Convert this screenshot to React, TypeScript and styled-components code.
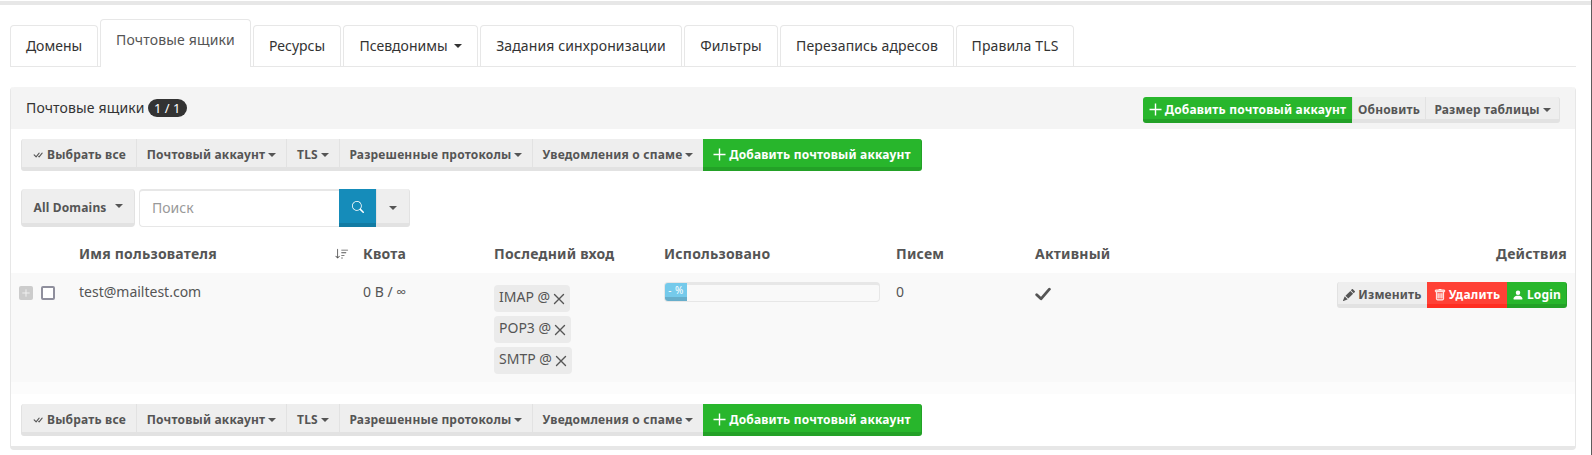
import React from "react";
import styled, { createGlobalStyle, css } from "styled-components";
import {
  BsCheckAll,
  BsPencilFill,
  BsPersonFill,
  BsSearch,
  BsSortDown,
  BsTrash,
} from "react-icons/bs";

const GlobalStyle = createGlobalStyle`
  *, *::before, *::after { box-sizing: border-box; }
  body {
    margin: 0;
    background: #fff;
    color: #555;
    font-family: "Noto Sans", "Open Sans", sans-serif;
    font-size: 14px;
    line-height: 20px;
    overflow: hidden;
  }
  button, input { font: inherit; }
`;

const Page = styled.div`
  height: 455px;
  border-right: 1px solid #5c5c5c;
  padding: 1px 15px 0 10px;
  background: #fff;
`;

const NavEdge = styled.div`
  height: 4px;
  margin: 0 -15px 0 -10px;
  background: #e7e7e7;
`;

const Tabs = styled.nav`
  display: flex;
  align-items: flex-end;
  gap: 2px;
  height: 62px;
  border-bottom: 1px solid #e7e7e7;
`;

const Tab = styled.a<{ $w: number; $active?: boolean; $tracking?: number }>`
  display: flex;
  justify-content: center;
  align-items: center;
  gap: 6px;
  width: ${(p) => p.$w}px;
  height: 41px;
  border: 1px solid #e7e7e7;
  border-bottom: 0;
  border-radius: 4px 4px 0 0;
  color: #333;
  background: #fff;
  letter-spacing: ${(p) => p.$tracking ?? 0.12}px;
  white-space: nowrap;
  ${(p) =>
    p.$active &&
    css`
      height: 48px;
      margin-bottom: -1px;
      padding-bottom: 8px;
      color: #555;
    `}
`;

const Caret = styled.span`
  display: inline-block;
  border: 4px solid transparent;
  border-top-color: currentColor;
  border-bottom: 0;
`;

const SelectCaret = styled(Caret)`
  margin: 0 0 3px 5px;
`;

const Panel = styled.section`
  margin-top: 20px;
  height: 363px;
  border: 1px solid #e7e7e7;
  border-top: 0;
  border-bottom-width: 4px;
  border-radius: 4px;
`;

const PanelHeader = styled.header`
  display: flex;
  justify-content: space-between;
  height: 42px;
  padding: 10px 15px 0;
  background: #f4f4f4;
  border-radius: 4px 4px 0 0;
  color: #333;
`;

const PanelTitle = styled.div`
  display: flex;
  align-items: center;
  gap: 3px;
  height: 22px;
  letter-spacing: 0.14px;
`;

const CountBadge = styled.span`
  width: 39px;
  height: 18px;
  border-radius: 9px;
  background: #333;
  color: #fff;
  font-size: 13px;
  line-height: 18px;
  letter-spacing: 0;
  text-align: center;
`;

const Group = styled.div`
  display: flex;
`;

type Tone = "plain" | "green" | "red" | "blue";
const tones = {
  plain: css`
    color: #555;
    background: #eee;
    border-color: #e2e2e2;
  `,
  green: css`
    color: #fff;
    background: #28b62c;
    border-color: #23a127;
  `,
  red: css`
    color: #fff;
    background: #ff4136;
    border-color: #ff2e22;
  `,
  blue: css`
    color: #fff;
    background: #158cba;
    border-color: #127ba3;
  `,
};

const Button = styled.button<{ $w: number; $h?: number; $tone?: Tone }>`
  display: flex;
  align-items: center;
  justify-content: center;
  gap: 3px;
  width: ${(p) => p.$w}px;
  height: ${(p) => p.$h ?? 32}px;
  padding: 3px 0 0;
  border: 0 solid;
  border-width: 0 0 4px 1px;
  font-size: 12px;
  line-height: 18px;
  font-weight: 700;
  letter-spacing: 0.18px;
  white-space: nowrap;
  ${(p) => tones[p.$tone ?? "plain"]}
  ${(p) => p.$tone && css`border-left-width: 0;`}
  &:first-child { border-radius: 3px 0 0 3px; }
  &:last-child { border-right-width: 1px; border-radius: 0 3px 3px 0; }
  &:only-child { border-radius: 4px; }
`;

const SearchButton = styled(Button)`
  padding: 1px 0 0;
`;

const ToolbarRow = styled.div<{ $top: number }>`
  padding: ${(p) => p.$top}px 0 0 10px;
`;

const SearchRow = styled.div`
  display: flex;
  gap: 4px;
  padding: 18px 0 0 10px;
`;

const SearchInput = styled.input`
  width: 200px;
  height: 38px;
  padding: 0 12px 2px;
  border: 1px solid #e7e7e7;
  border-top-width: 2px;
  border-right: 0;
  border-radius: 4px 0 0 4px;
  color: #555;
  outline: 0;
  &::placeholder { color: #999; opacity: 1; }
`;

const columns = "68px 284px 131px 170px 232px 139px 1fr";

const HeadRow = styled.div`
  display: grid;
  grid-template-columns: ${columns};
  align-items: center;
  height: 46px;
  padding: 8px 8px 0 0;
  font-weight: 700;
  letter-spacing: 0.22px;
`;

const NameHead = styled.div`
  display: flex;
  align-items: center;
  justify-content: space-between;
  padding-right: 14px;
`;

const EndCell = styled.div`
  display: flex;
  flex: 1;
  justify-content: flex-end;
`;

const BodyRow = styled.div`
  display: grid;
  grid-template-columns: ${columns};
  align-items: start;
  height: 109px;
  padding: 9px 8px 0 0;
  background: #f9f9f9;
`;

const Selectors = styled.div`
  display: flex;
  gap: 8px;
  padding: 4px 0 0 8px;
`;

const Expander = styled.span`
  display: flex;
  align-items: center;
  justify-content: center;
  width: 14px;
  height: 14px;
  border-radius: 2px;
  background: #ccc;
  color: #f5f5f5;
`;

const Checkbox = styled.span`
  width: 14px;
  height: 14px;
  border: 2px solid #8f8f9d;
  border-radius: 2px;
  background: #fff;
`;

const Logins = styled.div`
  display: flex;
  flex-direction: column;
  align-items: flex-start;
  gap: 4px;
  padding-top: 3px;
`;

const Login = styled.span`
  display: flex;
  align-items: center;
  gap: 3px;
  height: 27px;
  padding: 0 5px 4px;
  border-radius: 4px;
  background: #ebebeb;
  svg { margin-top: 5px; }
`;

const Progress = styled.div`
  width: 216px;
  height: 20px;
  border: 1px solid #e7e7e7;
  border-width: 3px 1px 1px;
  border-radius: 4px;
`;

const ProgressBar = styled.div`
  width: 22px;
  height: 18px;
  margin-top: -2px;
  border-bottom: 4px solid #67aecb;
  border-radius: 3px 0 0 3px;
  background: #75caeb;
  color: #fff;
  font-size: 10px;
  line-height: 15px;
  letter-spacing: 0.4px;
  text-align: center;
  white-space: nowrap;
`;

const CellIcon = styled.div`
  padding-top: 4px;
`;

const Actions = styled(EndCell)`
  button { height: 26px; padding-top: 4px; }
`;

const TableFoot = styled.div`
  height: 12px;
  background: #fcfcfc;
`;

const PlusIcon = ({ size = 13 }: { size?: number }) => (
  <svg width={size} height={size} viewBox="0 0 13 13" fill="none" stroke="currentColor" strokeWidth="1.4">
    <path d="M6.5 .5v12M.5 6.5h12" />
  </svg>
);

const CrossIcon = () => (
  <svg width="12" height="12" viewBox="0 0 12 12" fill="none" stroke="currentColor" strokeWidth="1.4" strokeLinecap="round">
    <path d="M1.5 1.5l9 9M10.5 1.5l-9 9" />
  </svg>
);

const CheckIcon = () => (
  <svg width="16" height="16" viewBox="0 0 16 16" fill="none" stroke="currentColor" strokeWidth="2.8" strokeLinecap="round" strokeLinejoin="round">
    <path d="M1.7 8.7l4.3 4.1L14.4 3.2" />
  </svg>
);

function Toolbar({ top }: { top: number }) {
  return (
    <ToolbarRow $top={top}>
      <Group>
        <Button $w={115}>
          <BsCheckAll size={12} /> Выбрать все
        </Button>
        <Button $w={150}>
          Почтовый аккаунт <Caret />
        </Button>
        <Button $w={53}>
          TLS <Caret />
        </Button>
        <Button $w={193}>
          Разрешенные протоколы <Caret />
        </Button>
        <Button $w={171}>
          Уведомления о спаме <Caret />
        </Button>
        <Button $w={219} $tone="green">
          <PlusIcon /> Добавить почтовый аккаунт
        </Button>
      </Group>
    </ToolbarRow>
  );
}

export default function App() {
  return (
    <Page>
      <GlobalStyle />
      <NavEdge />
      <Tabs>
        <Tab $w={88} $tracking={0}>
          Домены
        </Tab>
        <Tab $w={151} $active $tracking={0.16}>
          Почтовые ящики
        </Tab>
        <Tab $w={88} $tracking={0}>
          Ресурсы
        </Tab>
        <Tab $w={135} $tracking={0}>
          Псевдонимы <Caret />
        </Tab>
        <Tab $w={202}>Задания синхронизации</Tab>
        <Tab $w={94}>Фильтры</Tab>
        <Tab $w={174}>Перезапись адресов</Tab>
        <Tab $w={118}>Правила TLS</Tab>
      </Tabs>
      <Panel>
        <PanelHeader>
          <PanelTitle>
            Почтовые ящики <CountBadge>1 / 1</CountBadge>
          </PanelTitle>
          <Group>
            <Button $w={209} $h={26} $tone="green">
              <PlusIcon /> Добавить почтовый аккаунт
            </Button>
            <Button $w={73} $h={26}>
              Обновить
            </Button>
            <Button $w={135} $h={26}>
              Размер таблицы <Caret />
            </Button>
          </Group>
        </PanelHeader>
        <Toolbar top={10} />
        <SearchRow>
          <Group>
            <Button $w={114} $h={38}>
              All Domains <SelectCaret />
            </Button>
          </Group>
          <Group>
            <SearchInput placeholder="Поиск" />
            <SearchButton $w={37} $h={38} $tone="blue">
              <BsSearch size={12} />
            </SearchButton>
            <Button $w={34} $h={38}>
              <Caret />
            </Button>
          </Group>
        </SearchRow>
        <HeadRow>
          <span />
          <NameHead>
            Имя пользователя <BsSortDown size={14} />
          </NameHead>
          <span>Квота</span>
          <span>Последний вход</span>
          <span>Использовано</span>
          <span>Писем</span>
          <Group>
            Активный
            <EndCell>Действия</EndCell>
          </Group>
        </HeadRow>
        <BodyRow>
          <Selectors>
            <Expander>
              <PlusIcon size={8} />
            </Expander>
            <Checkbox />
          </Selectors>
          <span>test@mailtest.com</span>
          <span>0 B / ∞</span>
          <Logins>
            {["IMAP @", "POP3 @", "SMTP @"].map((label) => (
              <Login key={label}>
                {label} <CrossIcon />
              </Login>
            ))}
          </Logins>
          <Progress>
            <ProgressBar>- %</ProgressBar>
          </Progress>
          <span>0</span>
          <Group>
            <CellIcon>
              <CheckIcon />
            </CellIcon>
            <Actions>
              <Button $w={90}>
                <BsPencilFill size={12} /> Изменить
              </Button>
              <Button $w={80} $tone="red">
                <BsTrash size={12} strokeWidth={0.5} /> Удалить
              </Button>
              <Button $w={60} $tone="green">
                <BsPersonFill size={12} /> Login
              </Button>
            </Actions>
          </Group>
        </BodyRow>
        <TableFoot />
        <Toolbar top={10} />
      </Panel>
    </Page>
  );
}
